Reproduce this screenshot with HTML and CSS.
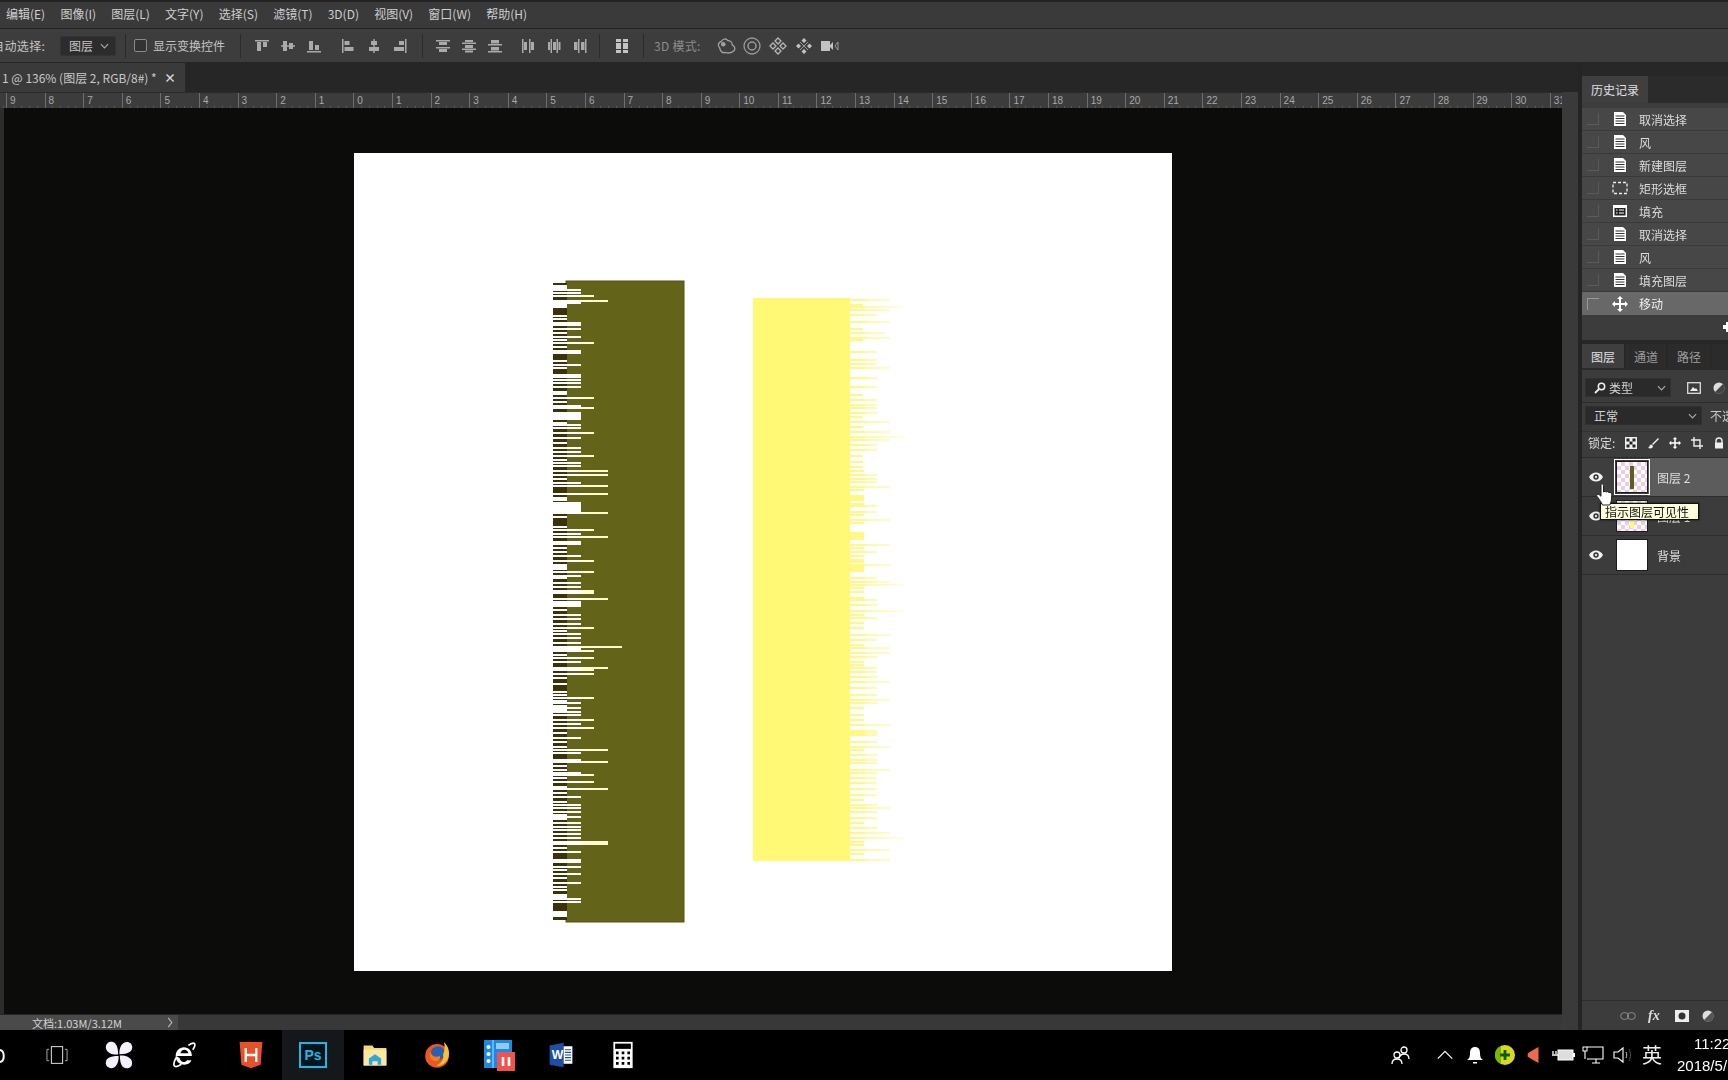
FILE: index.html
```html
<!DOCTYPE html>
<html lang="zh">
<head>
<meta charset="utf-8">
<title>Photoshop</title>
<link rel="stylesheet" href="styles.css">
</head>
<body>
<svg class="defs" width="0" height="0" aria-hidden="true">
  <defs>
    <symbol id="doc" viewBox="0 0 16 16"><path d="M2 1h9l3 3v11H2z" fill="#fff"/><path d="M3.500 5h9M3.500 7.500h9M3.500 10h9M3.500 12.500h9" stroke="#333" stroke-width="1"/></symbol>
    <symbol id="marq" viewBox="0 0 16 16"><rect x="1" y="2.500" width="14" height="11" fill="none" stroke="#eee" stroke-width="1.300" stroke-dasharray="3 2"/></symbol>
    <symbol id="fill" viewBox="0 0 16 16"><rect x="1" y="2" width="14" height="12" fill="#fff"/><rect x="2.500" y="5" width="11" height="7.500" fill="#222"/><path d="M4 7h1.500M7 7h5M4 10h1.500M7 10h5" stroke="#fff"/></symbol>
    <symbol id="move" viewBox="0 0 16 16"><path d="M8 0l3 3H9v4h4V5l3 3-3 3V9H9v4h2l-3 3-3-3h2V9H3v2L0 8l3-3v2h4V3H5z" fill="#fff"/></symbol>
    <symbol id="eye" viewBox="0 0 16 12"><path d="M1 6c3-6 11-6 14 0-3 6-11 6-14 0z" fill="#f2f2f2"/><circle cx="8" cy="6" r="2.700" fill="#333"/><circle cx="8" cy="6" r="1.200" fill="#ddd"/></symbol>
    <symbol id="a1" viewBox="0 0 16 16"><path d="M1 2h14v1.500H1zM3 4h4v9H3zM9 4h4v5H9z" fill="#aaa"/></symbol>
    <symbol id="a2" viewBox="0 0 16 16"><path d="M1 7.300h14v1.400H1zM3 3h4v10H3zM9 5h4v6H9z" fill="#aaa"/></symbol>
    <symbol id="a3" viewBox="0 0 16 16"><path d="M1 13h14v1.500H1zM3 3h4v9H3zM9 7h4v5H9z" fill="#aaa"/></symbol>
    <symbol id="a4" viewBox="0 0 16 16"><path d="M2 1h1.500v14H2zM4.500 3h5v4h-5zM4.500 9h9v4h-9z" fill="#aaa"/></symbol>
    <symbol id="a5" viewBox="0 0 16 16"><path d="M7.300 1h1.400v14H7.300zM5 3h6v4H5zM3 9h10v4H3z" fill="#aaa"/></symbol>
    <symbol id="a6" viewBox="0 0 16 16"><path d="M13 1h1.500v14H13zM7 3h5v4H7zM2 9h10v4H2z" fill="#aaa"/></symbol>
    <symbol id="a7" viewBox="0 0 16 16"><path d="M1 2h14v1.500H1zM1 9h14v1.500H1zM4 4h8v3H4zM4 11h8v3H4z" fill="#aaa"/></symbol>
    <symbol id="a8" viewBox="0 0 16 16"><path d="M1 4.500h14V6H1zM1 10.500h14V12H1zM4 2h8v2H4zM4 7h8v3H4zM4 12.500h8v2H4z" fill="#aaa"/></symbol>
    <symbol id="a9" viewBox="0 0 16 16"><path d="M1 6h14v1.500H1zM1 13h14v1.500H1zM4 2h8v3.500H4zM4 9h8v3.500H4z" fill="#aaa"/></symbol>
    <symbol id="a10" viewBox="0 0 16 16"><path d="M2 1h1.500v14H2zM9 1h1.500v14H9zM4 4h3v8H4zM11 4h3v8h-3z" fill="#aaa"/></symbol>
    <symbol id="a11" viewBox="0 0 16 16"><path d="M4.500 1H6v14H4.500zM10.500 1H12v14h-1.500zM2 4h2v8H2zM7 4h3v8H7zM12.500 4h2v8h-2z" fill="#aaa"/></symbol>
    <symbol id="a12" viewBox="0 0 16 16"><path d="M6 1h1.500v14H6zM13 1h1.500v14H13zM2 4h3.500v8H2zM9 4h3.500v8H9z" fill="#aaa"/></symbol>
    <symbol id="a13" viewBox="0 0 16 16"><path d="M2 1h5v3H2zM9 1h5v3H9zM2 5h5v6H2zM9 5h5v6H9zM2 12h5v3H2zM9 12h5v3H9z" fill="#c4c4c4"/></symbol>
    <symbol id="d1" viewBox="0 0 22 18"><path d="M4 11a4 4 0 0 1 2-7 4 4 0 0 1 7-1 5 5 0 0 1 5 5 4 4 0 0 1 2 6c-3 3-7 3-10 2-2 1-5 0-6-5z" fill="none" stroke="#a0a0a0" stroke-width="1.500"/><circle cx="8" cy="7" r="2.500" fill="#a0a0a0"/></symbol>
    <symbol id="d2" viewBox="0 0 18 18"><circle cx="9" cy="9" r="8" fill="none" stroke="#999" stroke-width="1.300"/><circle cx="9" cy="9" r="4" fill="none" stroke="#999" stroke-width="1.500"/></symbol>
    <symbol id="d3" viewBox="0 0 18 18"><path d="M9 1l3 3-3 3-3-3zM9 11l3 3-3 3-3-3zM1 9l3-3 3 3-3 3zM11 9l3-3 3 3-3 3z" fill="none" stroke="#b5b5b5" stroke-width="1.300"/></symbol>
    <symbol id="d4" viewBox="0 0 18 18"><path d="M9 1l2.500 2.500L9 6 6.500 3.500zM9 12l2.500 2.500L9 17l-2.500-2.500zM1 9l2.500-2.500L6 9l-2.500 2.500zM12 9l2.500-2.500L17 9l-2.500 2.500z" fill="#c2c2c2"/><path d="M5 5l8 8M13 5l-8 8" stroke="#999"/></symbol>
    <symbol id="d5" viewBox="0 0 20 16"><path d="M1 3h9v10H1zM10 7l3-3v8l-3-3z" fill="#c2c2c2"/><path d="M15 8l3-4v8z" fill="none" stroke="#999"/></symbol>
  </defs>
</svg>
<div class="app">
  <nav class="menubar">
    <span>编辑(E)</span><span>图像(I)</span><span>图层(L)</span><span>文字(Y)</span><span>选择(S)</span><span>滤镜(T)</span><span>3D(D)</span><span>视图(V)</span><span>窗口(W)</span><span>帮助(H)</span>
  </nav>
  <div class="optbar">
    <span class="opt-label">自动选择:</span>
    <span class="opt-select">图层<svg class="chev" viewBox="0 0 10 6"><path d="M1 1l4 4 4-4" fill="none" stroke="#aaa" stroke-width="1.300"/></svg></span>
    <i class="opt-sep"></i>
    <span class="opt-check"></span>
    <span class="opt-text">显示变换控件</span>
    <i class="opt-sep opt-sep-a"></i>
    <span class="aligns">
      <svg class="ai"><use href="#a1"/></svg><svg class="ai"><use href="#a2"/></svg><svg class="ai"><use href="#a3"/></svg>
      <svg class="ai ai-gap"><use href="#a4"/></svg><svg class="ai"><use href="#a5"/></svg><svg class="ai"><use href="#a6"/></svg>
    </span>
    <i class="opt-sep opt-sep-b"></i>
    <span class="aligns">
      <svg class="ai"><use href="#a7"/></svg><svg class="ai"><use href="#a8"/></svg><svg class="ai"><use href="#a9"/></svg>
      <svg class="ai ai-gap2"><use href="#a10"/></svg><svg class="ai"><use href="#a11"/></svg><svg class="ai"><use href="#a12"/></svg>
    </span>
    <i class="opt-sep opt-sep-c"></i>
    <svg class="ai ai-auto"><use href="#a13"/></svg>
    <i class="opt-sep opt-sep-d"></i>
    <span class="opt-3d">3D 模式:</span>
    <svg class="di di-first"><use href="#d1"/></svg><svg class="di"><use href="#d2"/></svg><svg class="di"><use href="#d3"/></svg><svg class="di"><use href="#d4"/></svg><svg class="di"><use href="#d5"/></svg>
  </div>
  <div class="main">
    <div class="workspace">
      <div class="tabrow"><div class="doctab"><span class="doctab-title">1 @ 136% (图层 2, RGB/8#) *</span><span class="doctab-x">×</span></div></div>
      <div class="docrow">
        <div class="doccol">
          <div class="ruler">
            <b>9</b><b>8</b><b>7</b><b>6</b><b>5</b><b>4</b><b>3</b><b>2</b><b>1</b><b>0</b><b>1</b><b>2</b><b>3</b><b>4</b><b>5</b><b>6</b><b>7</b><b>8</b><b>9</b><b>10</b><b>11</b><b>12</b><b>13</b><b>14</b><b>15</b><b>16</b><b>17</b><b>18</b><b>19</b><b>20</b><b>21</b><b>22</b><b>23</b><b>24</b><b>25</b><b>26</b><b>27</b><b>28</b><b>29</b><b>30</b><b>31</b>
          </div>
          <div class="pasteboard">
            <svg class="artboard" viewBox="354 153 818 818">
              <defs>
                <linearGradient id="cream" gradientUnits="userSpaceOnUse" x1="553" y1="0" x2="622" y2="0"><stop offset=".38" stop-color="#fff"/><stop offset=".45" stop-color="#fffbd6"/><stop offset="1" stop-color="#fff9c4"/></linearGradient>
                <linearGradient id="fade" gradientUnits="userSpaceOnUse" x1="850" y1="0" x2="904" y2="0"><stop offset="0" stop-color="#fff65c"/><stop offset=".26" stop-color="#fff65c"/><stop offset=".3" stop-color="#fff88a"/><stop offset=".52" stop-color="#fff9a0"/><stop offset=".76" stop-color="#fffbc4"/><stop offset="1" stop-color="#fffde0"/></linearGradient>
              </defs>
              <rect class="olive" x="566" y="281" width="118" height="641"/>
              <rect class="olive-dark" x="553" y="283" width="14" height="637"/>
              <path class="cuts" d="M553 286H567M553 288H567M553 290H581M553 293H581M553 296H594M553 301H608M553 303H581M553 305H567M553 307H567M553 316H567M553 319H567M553 323H581M553 325H581M553 329H581M553 333H567M553 337H581M553 340H567M553 343H594M553 347H567M553 351H581M553 353H581M553 361H567M553 365H581M553 368H567M553 375H581M553 377H581M553 380H581M553 383H581M553 387H581M553 392H567M553 394H567M553 398H594M553 402H567M553 406H581M553 408H594M553 413H581M553 415H581M553 417H581M553 419H581M553 423H567M553 425H581M553 428H581M553 433H594M553 438H581M553 443H567M553 448H581M553 452H581M553 456H594M553 460H567M553 463H581M553 466H581M553 471H608M553 475H608M553 479H567M553 483H581M553 486H608M553 494H608M553 498H567M553 500H567M553 503H581M553 505H581M553 507H581M553 509H581M553 511H581M553 513H608M553 517H567M553 527H567M553 530H594M553 534H581M553 537H608M553 542H581M553 544H581M553 548H567M553 552H567M553 556H581M553 561H594M553 565H567M553 567H567M553 569H567M553 572H594M553 576H581M553 578H567M553 583H581M553 587H581M553 591H594M553 593H594M553 599H608M553 602H581M553 604H581M553 606H581M553 610H567M553 615H581M553 619H581M553 624H581M553 628H594M553 631H567M553 634H581M553 638H581M553 643H581M553 647H622M553 649H581M553 651H594M553 655H567M553 658H594M553 662H581M553 668H608M553 670H594M553 674H594M553 678H567M553 684H567M553 692H567M553 695H567M553 698H594M553 701H567M553 703H581M553 706H567M553 708H581M553 710H567M553 712H581M553 715H581M553 720H594M553 724H581M553 728H594M553 733H567M553 738H581M553 742H567M553 747H567M553 750H608M553 753H581M553 760H581M553 762H608M553 766H567M553 770H567M553 773H581M553 775H594M553 778H567M553 782H594M553 787H567M553 789H608M553 793H567M553 797H581M553 802H567M553 805H581M553 808H581M553 812H581M553 815H567M553 817H581M553 819H567M553 823H581M553 827H581M553 830H581M553 834H581M553 838H581M553 842H608M553 844H608M553 848H567M553 852H581M553 860H581M553 862H581M553 867H581M553 870H567M553 874H581M553 878H567M553 883H581M553 887H567M553 890H567M553 895H567M553 897H567M553 899H581M553 902H581M553 912H567M553 914H567M553 916H567"/>
              <rect class="lemon" x="753" y="298" width="97" height="563"/>
              <path class="fringe" d="M850 300H890M850 305H863M850 307H904M850 310H890M850 315H877M850 322H890M850 329H863M850 333H886M850 338H890M850 340H863M850 352H877M850 360H877M850 364H877M850 368H890M850 378H877M850 387H877M850 395H863M850 400H877M850 405H877M850 408H877M850 413H877M850 417H863M850 422H890M850 427H863M850 432H890M850 437H904M850 440H890M850 445H877M850 450H877M850 456H863M850 462H863M850 467H863M850 471H864M850 475H877M850 479H877M850 482H877M850 487H890M850 490H864M850 496H864M850 498H864M850 500H864M850 504H864M850 506H877M850 512H877M850 515H864M850 520H890M850 523H864M850 533H864M850 535H864M850 537H864M850 539H864M850 545H890M850 548H864M850 552H877M850 556H864M850 560H864M850 562H864M850 565H890M850 567H864M850 569H864M850 571H864M850 578H877M850 582H890M850 585H904M850 588H864M850 592H864M850 598H864M850 600H877M850 605H877M850 611H904M850 615H864M850 618H877M850 623H864M850 628H864M850 635H890M850 640H877M850 645H864M850 648H890M850 653H890M850 657H877M850 662H864M850 665H864M850 668H877M850 672H877M850 677H877M850 682H890M850 688H877M850 695H877M850 700H890M850 703H877M850 708H864M850 715H864M850 720H864M850 725H890M850 731H877M850 733H877M850 735H877M850 742H877M850 747H890M850 750H864M850 755H877M850 760H877M850 763H877M850 770H890M850 773H877M850 778H877M850 783H877M850 789H877M850 795H877M850 800H864M850 805H877M850 808H890M850 812H877M850 818H877M850 823H864M850 828H877M850 833H890M850 838H904M850 842H864M850 845H864M850 850H890M850 854H864M850 860H890"/>
            </svg>
          </div>
          <div class="statusbar"><div class="status-info"><span>文档:1.03M/3.12M</span><svg class="status-arrow" viewBox="0 0 6 12"><path d="M1 1l4 5-4 5" fill="none" stroke="#bbb" stroke-width="1.200"/></svg></div></div>
        </div>
        <div class="vstrip"></div>
      </div>
    </div>
    <aside class="panels">
      <section class="history">
        <div class="ptabs ptabs-history"><span class="ptab ptab-on">历史记录</span></div>
        <ul class="hlist">
          <li class="hrow"><i class="hbox"></i><svg class="hicon"><use href="#doc"/></svg><span>取消选择</span></li>
          <li class="hrow"><i class="hbox"></i><svg class="hicon"><use href="#doc"/></svg><span>风</span></li>
          <li class="hrow"><i class="hbox"></i><svg class="hicon"><use href="#doc"/></svg><span>新建图层</span></li>
          <li class="hrow"><i class="hbox"></i><svg class="hicon"><use href="#marq"/></svg><span>矩形选框</span></li>
          <li class="hrow"><i class="hbox"></i><svg class="hicon"><use href="#fill"/></svg><span>填充</span></li>
          <li class="hrow"><i class="hbox"></i><svg class="hicon"><use href="#doc"/></svg><span>取消选择</span></li>
          <li class="hrow"><i class="hbox"></i><svg class="hicon"><use href="#doc"/></svg><span>风</span></li>
          <li class="hrow"><i class="hbox"></i><svg class="hicon"><use href="#doc"/></svg><span>填充图层</span></li>
          <li class="hrow hrow-on"><i class="hbox hbox-on"></i><svg class="hicon"><use href="#move"/></svg><span>移动</span></li>
        </ul>
        <div class="hfoot"><svg class="hfoot-icon" viewBox="0 0 12 12"><path d="M4 1h4v3h3v4H8v3H4V8H1V4h3z" fill="#fff"/></svg></div>
      </section>
      <section class="layers">
        <div class="ptabs ptabs-layers"><span class="ptab ptab-on ptab-l">图层</span><span class="ptab ptab-l">通道</span><span class="ptab ptab-l">路径</span></div>
        <div class="lfilter">
          <span class="lselect lselect-type"><svg class="lsearch" viewBox="0 0 12 12"><circle cx="7.500" cy="4.500" r="3.200" fill="none" stroke="#eee" stroke-width="1.500"/><path d="M5 7l-4 4" stroke="#eee" stroke-width="1.800"/></svg>类型<svg class="chev" viewBox="0 0 10 6"><path d="M1 1l4 4 4-4" fill="none" stroke="#aaa" stroke-width="1.300"/></svg></span>
          <svg class="lf-img" viewBox="0 0 14 12"><rect x=".7" y=".7" width="12.600" height="10.600" fill="none" stroke="#ddd" stroke-width="1.300"/><path d="M3 9l3-4 2 2 1-1 2 3z" fill="#eee"/></svg>
          <svg class="lf-adj" viewBox="0 0 12 12"><circle cx="6" cy="6" r="5.500" fill="#ddd"/><path d="M10 2L2 10a5.500 5.500 0 0 0 8-8z" fill="#444"/></svg>
        </div>
        <div class="lblend">
          <span class="lselect lselect-blend">正常<svg class="chev" viewBox="0 0 10 6"><path d="M1 1l4 4 4-4" fill="none" stroke="#aaa" stroke-width="1.300"/></svg></span>
          <span class="lopacity">不透明度</span>
        </div>
        <div class="llock">
          <span class="llock-label">锁定:</span>
          <svg class="lk" viewBox="0 0 12 12"><rect width="12" height="12" fill="#eee"/><path d="M1.500 1.500h3v3h-3zM7.500 1.500h3v3h-3zM4.500 4.500h3v3h-3zM1.500 7.500h3v3h-3zM7.500 7.500h3v3h-3z" fill="#222"/></svg>
          <svg class="lk" viewBox="0 0 12 12"><path d="M11 1L5 7l1 1 6-6zM4.500 7.500C2 8 3 10 1 11c3 1 5 0 5-2z" fill="#eee"/></svg>
          <svg class="lk" viewBox="0 0 16 16"><use href="#move"/></svg>
          <svg class="lk" viewBox="0 0 12 12"><path d="M3 0v9h9M0 3h9v9" fill="none" stroke="#eee" stroke-width="1.400"/></svg>
          <svg class="lk" viewBox="0 0 12 12"><path d="M3 6V4a3 3 0 0 1 6 0v2" fill="none" stroke="#eee" stroke-width="1.400"/><rect x="2" y="5.500" width="8" height="6" fill="#eee"/></svg>
        </div>
        <div class="lrow lrow-on">
          <svg class="leye"><use href="#eye"/></svg>
          <span class="thumb thumb-sel thumb-check"><i class="thumb-bar"></i></span>
          <span class="lname">图层 2</span>
        </div>
        <div class="lrow">
          <svg class="leye"><use href="#eye"/></svg>
          <span class="thumb thumb-check"><i class="thumb-bar thumb-bar-y"></i></span>
          <span class="lname">图层 1</span>
        </div>
        <div class="lrow">
          <svg class="leye"><use href="#eye"/></svg>
          <span class="thumb"></span>
          <span class="lname">背景</span>
        </div>
        <div class="lfoot">
          <svg class="lfi lfi-link" viewBox="0 0 16 8"><rect x=".7" y=".7" width="8" height="6.600" rx="3.300" fill="none" stroke="#888"/><rect x="7.300" y=".7" width="8" height="6.600" rx="3.300" fill="none" stroke="#888"/></svg>
          <span class="lfx">fx</span>
          <svg class="lfi" viewBox="0 0 14 12"><rect width="14" height="12" fill="#eee"/><circle cx="7" cy="6" r="3.500" fill="#333"/></svg>
          <svg class="lfi lfi-adj" viewBox="0 0 12 12"><circle cx="6" cy="6" r="5.500" fill="#ddd"/><path d="M10 2L2 10a5.500 5.500 0 0 0 8-8z" fill="#555"/></svg>
        </div>
        <div class="tooltip">指示图层可见性</div>
        <svg class="cursor" viewBox="0 0 18 24"><path d="M5 1c1.300-.7 2.500.1 2.500 1.600V9l1.500-.7 1.200.7 1.300-.4 1.200.9 1.300-.1c1.200.2 1.800 1.300 1.800 2.500l-.5 6-1.500 4.100H6.500L5 19 .9 13.200c-.8-1.300.9-2.700 2.100-1.700L5 13.300V3z" fill="#fff" stroke="#222"/></svg>
      </section>
    </aside>
  </div>
  <footer class="taskbar">
    <svg class="cortana" viewBox="0 0 6 14"><path d="M0 1c5 1 5 11 0 12" fill="none" stroke="#fff" stroke-width="2"/></svg>
    <span class="tb tb-first"><svg class="tbi" viewBox="0 0 32 32"><rect x="9.500" y="6.500" width="13" height="19" fill="none" stroke="#fff"/><path d="M7 9.500H4.500v13H7M25 9.500h2.500v13H25" fill="none" stroke="#bbb"/></svg></span>
    <span class="tb"><svg class="tbi" viewBox="0 0 32 32"><g fill="#f4f1fd"><path d="M15 15.500C8 16 1 13 1 7s7-8 11-4c2.500 3 3 8 3 12.500z"/><path d="M16.500 15C16 8 19 1 25 1s8 7 4 11c-3 2.500-8 3-12.500 3z"/><path d="M17 16.500c7-.5 14 2.500 14 8.500s-7 8-11 4c-2.500-3-3-8-3-12.500z"/><path d="M15.500 17c.5 7-2.500 14-8.500 14s-8-7-4-11c3-2.500 8-3 12.500-3z"/></g></svg></span>
    <span class="tb tb-ie"><svg class="tbi" viewBox="0 0 32 32"><path d="M7 17h18c0-6-3.500-10-9-10S6.500 11.500 6.500 17c0 6 4 10 10 10 4 0 7-2 8-5h-5c-1 1.500-2 2-3.500 2-3 0-4.500-2-5-4.500z" fill="#fff"/><path d="M12 14h9c-.5-2.500-2-4-4.500-4S12.500 11.500 12 14z" fill="#000"/><path d="M21 5c3-2 6-3 7-2s0 4-2 7M7 19c-2 4-3.500 8-2 9.500s5 0 8-2" fill="none" stroke="#fff" stroke-width="2"/></svg></span>
    <span class="tb tb-h"><svg class="tbi" viewBox="0 0 32 32"><path d="M3 1h26l-2 26-11 4-11-4z" fill="#e8502a"/><path d="M10 8v16M22 8v16M10 16h12" stroke="#fff" stroke-width="2.600"/></svg></span>
    <span class="tb tb-on"><span class="ps-tile">Ps</span></span>
    <span class="tb"><svg class="tbi" viewBox="0 0 32 32"><path d="M3 5h10l2 3h14v20H3z" fill="#f8d776"/><path d="M3 10h26v18H3z" fill="#fbe9a3"/><path d="M9 27v-7l7-5 7 5v7h-4v-4h-6v4z" fill="#2fa8dc"/></svg></span>
    <span class="tb"><svg class="tbi" viewBox="0 0 32 32"><circle cx="16" cy="17" r="13.500" fill="#e9591f"/><circle cx="17" cy="14" r="8" fill="#2a5fb8"/><path d="M24 1c5 5 7 11 5 18-3 7-9 10-14 9 7-3 9-8 8-13 2-4 2-9 1-14z" fill="#fbc02d"/><path d="M8 12c2 6 7 7 11 5 2 3-1 6-5 6-4-.5-7-4-6-11z" fill="#f57c1f"/></svg></span>
    <span class="tb"><svg class="tbi tbi-l" viewBox="0 0 32 32"><rect x="1" y="1" width="28" height="28" fill="#1e88e5"/><path d="M10 1v28" stroke="#7cc4f5" stroke-width="1.500"/><circle cx="5.500" cy="8" r="2" fill="#fff"/><circle cx="5.500" cy="15" r="2" fill="#fff"/><circle cx="5.500" cy="22" r="2" fill="#fff"/><rect x="13" y="4" width="13" height="6" fill="#90caf9"/><rect x="14" y="13" width="18" height="19" fill="#ef5350"/><path d="M20 18v9M26 18v9" stroke="#fff" stroke-width="2.600"/></svg></span>
    <span class="tb"><svg class="tbi" viewBox="0 0 32 32"><path d="M3 5l16-3v28L3 27z" fill="#1e4fa8"/><rect x="19" y="6" width="10" height="20" fill="#fff"/><path d="M20.500 10h7M20.500 13h7M20.500 16h7M20.500 19h7M20.500 22h7" stroke="#1e4fa8" stroke-width="1.300"/><text class="word-w" x="5.500" y="21">W</text></svg></span>
    <span class="tb"><svg class="tbi" viewBox="0 0 32 32"><rect x="5" y="1" width="22" height="30" fill="#fff"/><rect x="7" y="3" width="18" height="6" fill="#000"/><path d="M8 12h3v3H8zM14.500 12h3v3h-3zM21 12h3v3h-3zM8 18h3v3H8zM14.500 18h3v3h-3zM21 18h3v3h-3zM8 24h3v3H8zM14.500 24h3v3h-3zM21 24h3v3h-3z" fill="#000"/></svg></span>
    <div class="tray">
      <svg class="tri tri-people" viewBox="0 0 20 20"><g fill="none" stroke="#fff" stroke-width="1.300"><circle cx="13" cy="5" r="3"/><path d="M8 13c1-3 3-4 5-4s5 1 5 5"/><circle cx="6" cy="10" r="3"/><path d="M1 19c0-3 2-5 5-5s5 2 5 5"/></g></svg>
      <svg class="tri tri-chev" viewBox="0 0 20 20"><path d="M2 14l8-8 8 8" fill="none" stroke="#fff" stroke-width="1.300"/></svg>
      <svg class="tri" viewBox="0 0 20 20"><path d="M10 2c-3 0-5 2-5 6 0 4-1 6-3 7h16c-2-1-3-3-3-7 0-4-2-6-5-6z" fill="#fff"/><path d="M8 17h4v1.500H8z" fill="#fff"/></svg>
      <svg class="tri" viewBox="0 0 20 20"><circle cx="10" cy="10" r="10" fill="#d8d820"/><path d="M0 10a10 10 0 0 1 6-9v18a10 10 0 0 1-6-9z" fill="#7ab800"/><path d="M10 5v10M5 10h10" stroke="#0b5d1e" stroke-width="2.800"/></svg>
      <svg class="tri tri-red" viewBox="0 0 20 20"><path d="M3 8l12-7v18L3 12z" fill="#ee6a4a"/></svg>
      <svg class="tri tri-batt" viewBox="0 0 24 20"><rect x="7" y="5" width="15" height="10" fill="#ddd" stroke="#fff"/><path d="M22 8h2v4h-2z" fill="#fff"/><path d="M1 10h6M2 6v3M5 6v3" stroke="#fff" stroke-width="1.300"/></svg>
      <svg class="tri tri-mon" viewBox="0 0 22 20"><path d="M5 2h16v12H5M10 18h8M14 14v4M3 14v-8" fill="none" stroke="#fff" stroke-width="1.100"/><rect x="1" y="2" width="4" height="4" fill="none" stroke="#fff"/></svg>
      <svg class="tri" viewBox="0 0 20 20"><path d="M2 7h4l5-4v14l-5-4H2z" fill="none" stroke="#fff" stroke-width="1.100"/><path d="M14 7c1 2 1 4 0 6" fill="none" stroke="#ccc"/><path d="M17 4c2 4 2 8 0 12" fill="none" stroke="#555"/></svg>
      <span class="tray-ime">英</span>
      <div class="clock"><span class="clock-time">11:22</span><span class="clock-date">2018/5/18</span></div>
    </div>
  </footer>
</div>
</body>
</html>
```

FILE: styles.css
```css
* { box-sizing: border-box; }
html, body { margin: 0; padding: 0; background: #000; }
body { font-family: "Noto Sans CJK SC", "Noto Sans", sans-serif; color: #ccc; }
.defs { position: absolute; }
.app { width: 1728px; height: 1080px; overflow: hidden; display: flex; flex-direction: column; filter: blur(.3px); }

/* menu */
.menubar { height: 29px; flex: none; display: flex; align-items: center; gap: 15.2px; padding: 0 0 3px 6px; background: #3a3a3a; border-top: 2px solid #222; border-bottom: 1px solid #222; font-size: 12px; color: #cfcfcf; }

/* options */
.optbar { height: 34px; flex: none; display: flex; align-items: center; background: #3d3d3d; border-bottom: 1px solid #262626; font-size: 12px; color: #c4c4c4; }
.opt-label { margin-left: -8px; width: 68px; flex: none; letter-spacing: .4px; white-space: nowrap; }
.opt-select { width: 56px; height: 20px; flex: none; display: flex; align-items: center; justify-content: space-between; padding: 0 6px 0 8px; background: #2c2c2c; border: 1px solid #333; }
.chev { width: 9px; height: 6px; flex: none; }
.opt-sep { width: 1px; height: 24px; flex: none; background: #2a2a2a; margin-left: 9px; }
.opt-check { width: 13px; height: 13px; flex: none; margin-left: 8px; border: 1px solid #8a8a8a; border-radius: 2px; background: #333; }
.opt-text { margin-left: 6px; width: 74px; flex: none; white-space: nowrap; }
.opt-sep-a { margin-left: 13px; }
.aligns { display: flex; flex: none; margin-left: 13px; }
.ai { width: 16px; height: 16px; flex: none; margin-right: 10px; }
.aligns .ai:last-child { margin-right: 0; }
.ai-gap { margin-left: 8px; }
.ai-gap2 { margin-left: 7px; }
.opt-sep-b { margin-left: 14px; }
.opt-sep-b + .aligns { margin-left: 12px; }
.opt-sep-c { margin-left: 11px; }
.ai-auto { margin: 0 0 0 14px; }
.opt-sep-d { margin-left: 13px; }
.opt-3d { margin-left: 10px; width: 46px; flex: none; color: #8c8c8c; letter-spacing: .3px; white-space: nowrap; }
.di { width: 20px; height: 18px; flex: none; margin-right: 6px; }
.di-first { margin-left: 16px; }

/* main */
.main { flex: 1; display: flex; min-height: 0; }
.workspace { width: 1578px; flex: none; display: flex; flex-direction: column; }
.tabrow { height: 29px; flex: none; background: #262626; }
.doctab { width: 185px; height: 29px; display: flex; align-items: center; padding-left: 2px; background: #3a3a3a; font-size: 12px; color: #c8c8c8; white-space: nowrap; }
.doctab-title { width: 162px; flex: none; }
.doctab-x { font-size: 12px; color: #ddd; font-weight: 700; }
.docrow { flex: 1; display: flex; min-height: 0; }
.doccol { width: 1562px; flex: none; display: flex; flex-direction: column; }
.vstrip { flex: 1; background: #3a3a3a; }

.ruler { height: 16px; flex: none; display: flex; padding-left: 6px; overflow: hidden; background-color: #3c3c3c; background-image: repeating-linear-gradient(90deg, #585858 0 1px, transparent 1px 7.72px); background-size: 100% 2px; background-position: 6px bottom; background-repeat: repeat-x; border-top: 1px solid #2a2a2a; }
.ruler b { width: 38.6px; flex: none; border-left: 1px solid #6e6e6e; padding: 1px 0 0 3px; font-size: 10px; line-height: 14px; font-weight: 400; color: #a8a8a8; font-family: "Liberation Sans", sans-serif; }

.pasteboard { flex: 1; min-height: 0; display: flex; align-items: center; padding: 2px 0 0 350px; background: #0c0c0b; border-left: 4px solid #2c2c2c; }
.artboard { width: 818px; height: 818px; flex: none; background: #fff; display: block; }
.olive { fill: #64631a; stroke: #53521a; stroke-width: 1; }
.olive-dark { fill: #3b3209; }
.cuts { fill: none; stroke: url(#cream); stroke-width: 2; }
.lemon { fill: #fff975; }
.fringe { fill: none; stroke: url(#fade); stroke-width: 1.600; }

.statusbar { height: 16px; flex: none; background: #383838; border-top: 1px solid #262626; }
.status-info { width: 178px; height: 100%; display: flex; align-items: center; justify-content: space-between; padding: 0 5px 0 32px; background: #4a4a4a; font-size: 11px; color: #d2d2d2; white-space: nowrap; }
.status-arrow { width: 6px; height: 11px; flex: none; }

/* panels */
.panels { flex: 1; display: flex; flex-direction: column; background: #272727; border-left: 4px solid #242424; padding-top: 13px; overflow: hidden; position: relative; }
.history { flex: none; background: #3c3c3c; }
.ptabs { height: 27px; display: flex; background: #2b2b2b; font-size: 12px; color: #9d9d9d; }
.ptabs-layers { height: 26px; flex: none; padding-bottom: 2px; }
.ptab { display: flex; align-items: center; justify-content: center; white-space: nowrap; }
.ptab-on { background: #3f3f3f; color: #e0e0e0; }
.ptabs-history .ptab { width: 66px; }
.hlist { list-style: none; margin: 0; padding: 5px 0 0; }
.hrow { height: 23px; display: flex; align-items: center; padding-left: 5px; background: #474747; border-bottom: 1px solid #3a3a3a; font-size: 12px; color: #dcdcdc; }
.hrow-on { background: #686868; color: #f0f0f0; border-bottom: 0; }
.hbox { width: 12px; height: 12px; flex: none; border-right: 1px solid #5a5a5a; border-bottom: 1px solid #5a5a5a; }
.hbox-on { border: 0; border-top: 1px solid #999; border-left: 1px solid #999; }
.hicon { width: 16px; height: 16px; flex: none; margin: 0 11px 0 13px; }
.hfoot { height: 25px; position: relative; background: #3c3c3c; overflow: hidden; }
.hfoot-icon { position: absolute; right: -6px; top: 6px; width: 12px; height: 12px; }

.layers { flex: 1; margin-top: 4px; background: #3c3c3c; display: flex; flex-direction: column; position: relative; min-height: 0; }
.ptab-l { width: 43px; border-right: 1px solid #262626; }
.lfilter { height: 33px; flex: none; display: flex; align-items: center; padding: 3px 0 0 3px; border-bottom: 1px solid #2c2c2c; }
.lselect { height: 19px; flex: none; display: flex; align-items: center; padding: 0 4px 0 8px; background: #2a2a2a; border: 1px solid #303030; font-size: 12px; color: #d4d4d4; }
.lselect .chev { margin-left: auto; }
.lselect-type { width: 86px; }
.lsearch { width: 12px; height: 12px; margin-right: 3px; flex: none; }
.lf-img { width: 14px; height: 12px; margin-left: 16px; flex: none; }
.lf-adj { width: 12px; height: 12px; margin-left: 12px; flex: none; }
.lblend { height: 29px; flex: none; display: flex; align-items: center; padding: 0 0 3px 3px; border-bottom: 1px solid #333; white-space: nowrap; }
.lselect-blend { width: 117px; }
.lopacity { margin-left: 8px; font-size: 12px; color: #c8c8c8; }
.llock { height: 26px; flex: none; display: flex; align-items: center; padding: 0 0 4px 6px; font-size: 12px; color: #dcdcdc; border-bottom: 1px solid #2c2c2c; }
.llock-label { width: 37px; flex: none; }
.lk { width: 12px; height: 12px; flex: none; margin-right: 10px; }
.lrow { height: 39px; flex: none; display: flex; align-items: center; border-bottom: 1px solid #2c2c2c; font-size: 12px; color: #dedede; }
.lrow-on { background: linear-gradient(90deg, #3e3e3e 0 66px, #5c5c5c 66px); }
.leye { width: 16px; height: 12px; flex: none; margin: 0 12px 0 6px; }
.thumb { width: 32px; height: 32px; flex: none; display: flex; justify-content: center; align-items: center; background: #fff; border: 1px solid #1c1c1c; }
.thumb-check { background: conic-gradient(#f0cbe9 25%, #fff 0 50%, #f0cbe9 0 75%, #fff 0) 0 0 / 8px 8px; }
.thumb-sel { outline: 1px solid #fff; outline-offset: 1px; }
.thumb-bar { width: 4px; height: 23px; background: #5f5e1c; }
.thumb-bar-y { background: #fff97a; }
.lname { margin-left: 9px; white-space: nowrap; }
.lfoot { margin-top: auto; height: 30px; flex: none; display: flex; align-items: center; padding-left: 38px; border-top: 1px solid #2c2c2c; }
.lfi { width: 14px; height: 12px; flex: none; margin-right: 13px; }
.lfi-link { width: 16px; height: 8px; margin-right: 12px; }
.lfi-adj { width: 12px; }
.lfx { width: 14px; margin-right: 13px; flex: none; font: italic 700 14px "Liberation Serif", serif; color: #ddd; }
.tooltip { position: absolute; left: 18px; top: 159px; width: 99px; height: 17px; padding-left: 4px; background: #fdfddc; border: 1px solid #111; box-shadow: 0 0 2px #111; color: #111; font-size: 12px; line-height: 15px; white-space: nowrap; }
.cursor { position: absolute; left: 14px; top: 139px; width: 18px; height: 24px; }

/* taskbar */
.taskbar { height: 50px; flex: none; display: flex; align-items: center; background: #000; position: relative; }
.cortana { position: absolute; left: 0; top: 19px; width: 6px; height: 14px; }
.tb { width: 62px; height: 50px; flex: none; display: flex; align-items: center; justify-content: center; }
.tb-first { margin-left: 26px; }
.tb-ie { margin-left: 3px; }
.tb-h { margin-left: 5px; }
.tb-on { background: #14181b; }
.tbi { width: 28px; height: 30px; flex: none; }
.tbi-l { width: 32px; height: 32px; }
.ps-tile { width: 28px; height: 26px; display: flex; align-items: center; justify-content: center; border: 2px solid #22b5e6; color: #22b5e6; background: #06141e; font: 700 14px "Liberation Sans", sans-serif; }
.word-w { font: 700 14px "Liberation Sans", sans-serif; fill: #fff; }
.tray { margin-left: auto; display: flex; align-items: center; height: 50px; }
.tri { width: 20px; height: 20px; flex: none; margin-right: 10px; }
.tri-people { margin-right: 25px; }
.tri-chev { margin-right: 11px; width: 18px; }
.tri-red { margin-right: 8px; width: 18px; }
.tri-batt { width: 24px; margin-right: 7px; }
.tri-mon { width: 22px; margin-right: 8px; }
.tray-ime { width: 24px; flex: none; font-size: 20px; line-height: 1; color: #eee; }
.clock { width: 51px; flex: none; margin-left: 11px; display: flex; flex-direction: column; overflow: hidden; white-space: nowrap; font-family: "Liberation Sans", sans-serif; font-size: 15px; line-height: 22px; color: #fff; }
.clock-time { padding-left: 17px; }
```
